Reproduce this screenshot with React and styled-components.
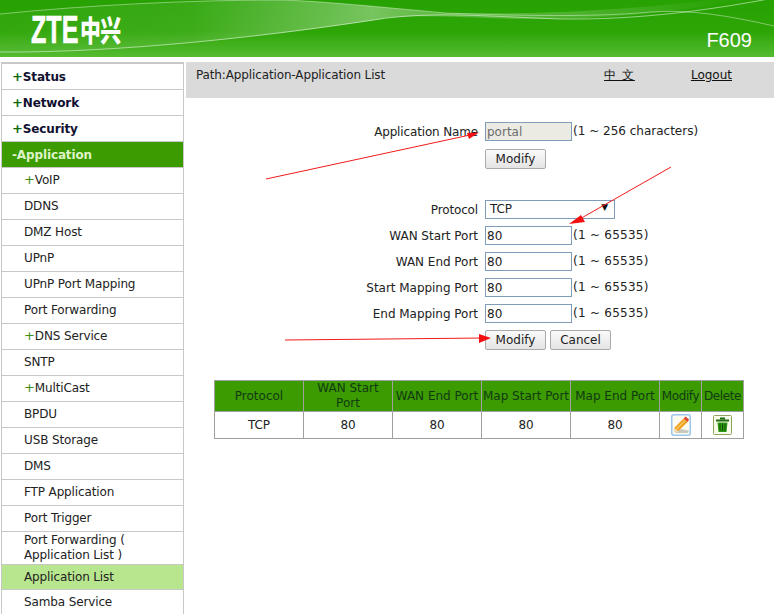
import React from "react";
import styled, { createGlobalStyle } from "styled-components";

const Global = createGlobalStyle`
  html, body { margin: 0; padding: 0; background: #fff; }
  body { width: 774px; height: 614px; overflow: hidden; font-family: "DejaVu Sans", sans-serif; font-size: 12px; color: #222; letter-spacing: -0.13px; }
`;
const Page = styled.div`position: relative; width: 774px; height: 614px; overflow: hidden;`;
const Header = styled.header`
  position: relative; height: 57px; overflow: hidden;
  background: linear-gradient(#27a202 0%, #2da506 55%, #55bb32 100%);
`;
const Waves = styled.svg`position: absolute; inset: 0; width: 774px; height: 57px;`;
const HeaderRow = styled.div`
  position: relative; display: flex; justify-content: space-between; height: 57px;
  padding: 14px 22px 0 31px; box-sizing: border-box; color: #fff; letter-spacing: 0;
`;
const Logo = styled.div`display: flex; align-items: flex-start; height: 32px; line-height: 32px; white-space: nowrap;`;
const LogoLatin = styled.span`
  display: inline-block; width: 49px; transform: scaleX(.66); transform-origin: left center;
  font: bold 38px/32px "Liberation Sans", sans-serif; -webkit-text-stroke: .6px #fff;
`;
const LogoCjk = styled.span`
  display: inline-block; transform: scaleX(.72); transform-origin: left center;
  font: 900 29px/31px "Noto Sans CJK SC", sans-serif; letter-spacing: -1px;
`;
const Model = styled.div`font: 20px/24px "Liberation Sans", sans-serif; margin-top: 14px;`;
const Body = styled.div`display: flex; margin-top: 5px; height: 552px;`;
const Side = styled.nav`
  width: 183px; margin-left: 1px; box-sizing: border-box; height: 552px; overflow: hidden;
  border: solid #c8c8c8; border-width: 2px 1px 0 1px; flex: none;
`;
const Item = styled.div`
  box-sizing: border-box; display: flex; align-items: center; height: ${p => p.$h || 26}px;
  border-bottom: 1px solid #c8c8c8; line-height: 15px;
  padding-left: ${p => (p.$top ? 10 : 22)}px; padding-top: ${p => (p.$top ? 1 : 0)}px;
  font-weight: ${p => (p.$top ? "bold" : "normal")};
  background: ${p => (p.$state === "open" ? "#3c9b00" : p.$state === "on" ? "#b8e68e" : "transparent")};
  color: ${p => (p.$state === "open" ? "#dff3c8" : p.$top ? "#101030" : "#222")};
`;
const Plus = styled.span`color: ${p => (p.$top ? "#0a6a0a" : "#3c8c10")}; font-weight: ${p => (p.$top ? "bold" : "normal")}; font-size: 13px; line-height: 0;`;
const Main = styled.main`flex: 1; margin-left: 2px;`;
const PathBar = styled.div`
  height: 36px; background: #dadada; display: flex; align-items: flex-start; padding: 6px 42px 0 10px; box-sizing: border-box;
  line-height: 15px; color: #222;
`;
const PathText = styled.span`flex: 1;`;
const TopLink = styled.a`color: #111; text-decoration: underline; margin-left: ${p => p.$gap || 0}px; letter-spacing: ${p => p.$ls || 0}px;`;
const Form = styled.div`
  display: grid; grid-template-columns: 292px auto; column-gap: 7px; justify-content: start; margin-top: 24px;
`;
const Label = styled.label`
  grid-column: 1; text-align: right; height: 19px; line-height: 21px; margin-top: ${p => p.$mt || 0}px; color: #222; white-space: nowrap;
  letter-spacing: ${p => (p.$wide ? -0.03 : -0.15)}px;
`;
const Field = styled.div`
  grid-column: 2; display: flex; align-items: center; height: 19px; margin-top: ${p => p.$mt || 0}px; margin-bottom: 7px;
`;
const TextInput = styled.input`
  box-sizing: border-box; width: 87px; height: 19px; border: 1px solid #7f9db9; padding: 0 1px; margin: 0 1px 0 0;
  font: 12px "DejaVu Sans", sans-serif; color: ${p => (p.disabled ? "#6d6d6d" : "#222")};
  background: ${p => (p.disabled ? "#ebebe4" : "#fff")};
`;
const Hint = styled.span`color: #222; white-space: nowrap; position: relative; top: -1px; letter-spacing: ${p => (p.$wide ? 0.25 : 0)}px;`;
const Sel = styled.div`
  box-sizing: border-box; width: 130px; height: 19px; border: 1px solid #7f9db9; padding: 0 4px; display: flex;
  justify-content: space-between; line-height: 17px; color: #222;
`;
const Caret = styled.span`font-size: 9px; color: #111; padding-right: 2px; line-height: 13px;`;
const Btn = styled.button`
  box-sizing: border-box; height: 20px; width: 61px; padding: 0; margin-right: 4px;
  border: 1px solid #aaa; border-radius: 2px; font: 12px "DejaVu Sans", sans-serif; color: #222;
  background: linear-gradient(#fafafa, #e4e4e4);
`;
const Table = styled.table`
  border-collapse: collapse; table-layout: fixed; width: 529px; margin: 24px 0 0 28px;
  & td, & th { border: 1px solid #a0a0a0; text-align: center; padding: 0; font-weight: normal; line-height: 15px; }
  & th { background: #3c9b00; color: #123a12; height: 30px; letter-spacing: 0; white-space: nowrap; }
  & td { height: 26px; color: #222; }
`;
const TightHead = styled.span`letter-spacing: -0.4px;`;
const Icon = styled.svg`display: block; margin: 0 auto;`;
const Arrows = styled.svg`position: absolute; left: 0; top: 0; width: 774px; height: 614px; pointer-events: none;`;

const menu = [
  ["+", "Status", 1], ["+", "Network", 1], ["+", "Security", 1], ["-", "Application", 1, "open"],
  ["+", "VoIP"], ["", "DDNS"], ["", "DMZ Host"], ["", "UPnP"], ["", "UPnP Port Mapping"], ["", "Port Forwarding"],
  ["+", "DNS Service"], ["", "SNTP"], ["+", "MultiCast"], ["", "BPDU"], ["", "USB Storage"], ["", "DMS"],
  ["", "FTP Application"], ["", "Port Trigger"],
];

const ports = ["WAN Start Port", "WAN End Port", "Start Mapping Port", "End Mapping Port"];

export default function App() {
  return (
    <Page>
      <Global />
      <Header>
        <Waves viewBox="0 0 774 57">
          <defs>
            <linearGradient id="sw" x1="0" x2="1" y1="0" y2="0">
              <stop offset="0" stopColor="#fff" stopOpacity=".03" />
              <stop offset=".25" stopColor="#fff" stopOpacity=".08" />
              <stop offset=".48" stopColor="#fff" stopOpacity=".36" />
              <stop offset=".58" stopColor="#fff" stopOpacity=".22" />
              <stop offset=".75" stopColor="#fff" stopOpacity=".16" />
              <stop offset=".92" stopColor="#fff" stopOpacity=".02" />
            </linearGradient>
          </defs>
          <path d="M0 14 C90 5 190 0 280 0 C320 1 380 7 445 13 C520 14 620 14 774 -8 L774 -8 C700 12 600 20 520 19 C470 18 420 14 387 18 C300 32 150 52 0 52 Z" fill="url(#sw)" />
          <path d="M0 52 C120 53 270 36 387 18 C440 12 480 16 560 19 C640 20 710 10 774 -2" fill="none" stroke="#fff" strokeOpacity=".5" strokeWidth="1" />
          <path d="M0 14 C90 5 190 0 280 0 C320 1 380 7 445 13 C500 15 590 18 650 12 C690 9 730 16 774 26" fill="none" stroke="#fff" strokeOpacity=".4" strokeWidth="1" />
        </Waves>
        <HeaderRow>
          <Logo>
            <LogoLatin>ZTE</LogoLatin>
            <LogoCjk>中兴</LogoCjk>
          </Logo>
          <Model>F609</Model>
        </HeaderRow>
      </Header>
      <Body>
        <Side>
          {menu.map(([s, t, top, st]) => (
            <Item key={t} $top={top} $state={st}>
              <span>
                {st !== "open" && s ? <Plus $top={top}>{s}</Plus> : s}
                {t}
              </span>
            </Item>
          ))}
          <Item $h={33}><span>Port Forwarding (<br />Application List )</span></Item>
          <Item $h={25} $state="on">Application List</Item>
          <Item>Samba Service</Item>
        </Side>
        <Main>
          <PathBar>
            <PathText>Path:Application-Application List</PathText>
            <TopLink href="#" $ls={1}>中 文</TopLink>
            <TopLink href="#" $gap={56}>Logout</TopLink>
          </PathBar>
          <Form>
            <Label>Application Name</Label>
            <Field>
              <TextInput disabled defaultValue="portal" />
              <Hint>(1 ~ 256 characters)</Hint>
            </Field>
            <Field $mt={1}><Btn>Modify</Btn></Field>
            <Label $mt={25} style={{ gridRow: 3 }}>Protocol</Label>
            <Field $mt={25} style={{ gridRow: 3 }}>
              <Sel>TCP<Caret>▼</Caret></Sel>
            </Field>
            {ports.map((l) => (
              <React.Fragment key={l}>
                <Label $wide>{l}</Label>
                <Field>
                  <TextInput defaultValue="80" />
                  <Hint $wide>(1 ~ 65535)</Hint>
                </Field>
              </React.Fragment>
            ))}
            <Field style={{ gridColumn: 2 }}>
              <Btn>Modify</Btn>
              <Btn>Cancel</Btn>
            </Field>
          </Form>
          <Table>
            <colgroup>
              <col width="89" /><col width="89" /><col width="89" /><col width="89" /><col width="89" /><col width="42" /><col width="42" />
            </colgroup>
            <thead>
              <tr>
                <th>Protocol</th><th>WAN Start<br />Port</th><th>WAN End Port</th><th>Map Start Port</th><th>Map End Port</th>
                <th><TightHead>Modify</TightHead></th><th><TightHead>Delete</TightHead></th>
              </tr>
            </thead>
            <tbody>
              <tr>
                <td>TCP</td><td>80</td><td>80</td><td>80</td><td>80</td>
                <td>
                  <Icon width="20" height="22" viewBox="0 0 20 22">
                    <rect x=".75" y=".75" width="18.5" height="20.5" rx="2" fill="#fbfbf0" stroke="#9cc6ee" strokeWidth="1.5" />
                    <path d="M4 19 L17 19 L18 16.5 L9 15 Z" fill="#8a8a80" opacity=".45" />
                    <path d="M3.2 14 L3 18.6 L7.4 17 Z" fill="#f1d6a6" />
                    <path d="M3.2 14 L12.6 4.4 L16.6 8 L7.4 17 Z" fill="#f0a020" />
                    <path d="M5.2 15.4 L14.4 6.2" stroke="#f8cf6a" strokeWidth="1.2" />
                    <path d="M12.6 4.4 L14.6 2.4 L18 5.6 L16.6 8 Z" fill="#e2452f" />
                  </Icon>
                </td>
                <td>
                  <Icon width="19" height="20" viewBox="0 0 19 20">
                    <rect x=".5" y=".5" width="18" height="19" rx="1" fill="#f8faea" stroke="#8aa55a" />
                    <rect x="7" y="2.5" width="5" height="2" fill="#1d6a10" />
                    <rect x="3" y="4.5" width="13" height="2" fill="#1d6a10" />
                    <path d="M4.5 7.5 H14.5 L13.5 17 H5.5 Z" fill="#2e9a12" />
                    <path d="M7 8.5 V16 M9.5 8.5 V16 M12 8.5 V16" stroke="#0f4f08" strokeWidth="1" />
                  </Icon>
                </td>
              </tr>
            </tbody>
          </Table>
        </Main>
      </Body>
      <Arrows viewBox="0 0 774 614">
        <g stroke="#f21b1b" strokeWidth="1" fill="#f21010">
          <line x1="266" y1="179" x2="470" y2="135" />
          <path d="M467 133 L479 132.5 L469 139 Z" stroke="none" />
          <line x1="671" y1="167" x2="578" y2="220" />
          <path d="M581 215 L569 224 L585 222 Z" stroke="none" />
          <line x1="285" y1="340" x2="484" y2="338" />
          <path d="M479 334 L491 338 L479 343 Z" stroke="none" />
        </g>
      </Arrows>
    </Page>
  );
}
